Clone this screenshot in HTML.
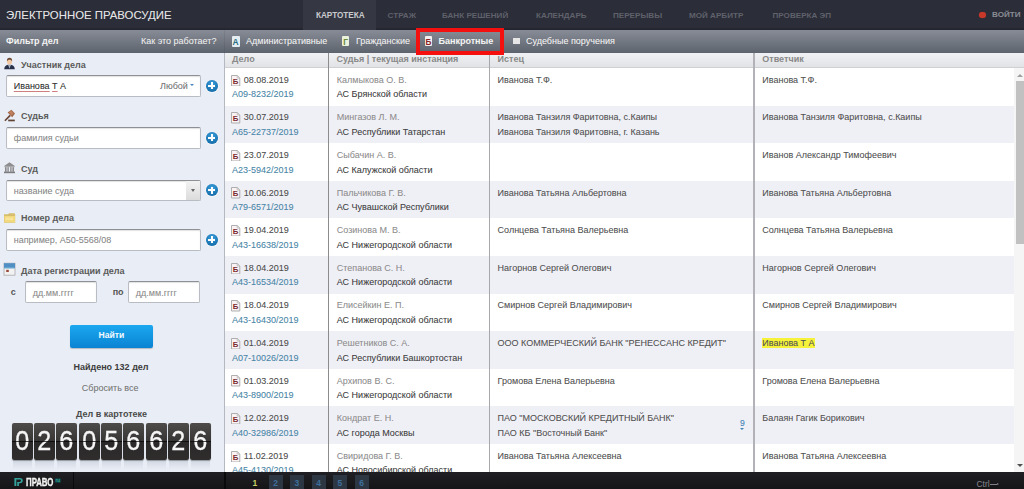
<!DOCTYPE html>
<html><head><meta charset="utf-8"><title>Картотека</title><style>
*{margin:0;padding:0}
html,body{width:1024px;height:489px;overflow:hidden;background:#fff}
body{position:relative;font-family:"Liberation Sans",sans-serif}
.t{position:absolute;white-space:nowrap;text-shadow:0 0 0.6px color-mix(in srgb,currentColor 28%,transparent)}
.r{position:absolute}
.plus{position:absolute;width:12px;height:12px;border-radius:50%;background:radial-gradient(circle at 50% 30%,#3a9edc,#1670ad 75%);box-shadow:0 0.5px 1.5px rgba(255,255,255,.95),0 0 0.5px rgba(0,40,80,.4)}
.plus:before{content:"";position:absolute;left:5px;top:2.5px;width:2px;height:7px;background:#fff}
.plus:after{content:"";position:absolute;left:2.5px;top:5px;width:7px;height:2px;background:#fff}
.sp{text-decoration:underline solid rgba(215,80,80,.6);text-decoration-thickness:0.6px;text-underline-offset:1.6px}
.tile{position:absolute;top:423px;width:20.6px;height:36.8px;border-radius:2px;background:linear-gradient(#4e4c4b,#383635 49%,#2a2828 51%,#302e2d);box-shadow:0 1px 1px rgba(0,0,0,.3);overflow:hidden}
.tile span{position:absolute;left:0;width:100%;text-align:center;top:4.2px;font-size:28px;line-height:28px;color:#f6f6f6;transform:scaleX(0.9);-webkit-text-stroke:0.3px #f6f6f6}
.tile:after{content:"";position:absolute;left:0;right:0;top:17.5px;height:1px;background:rgba(0,0,0,.7)}
.bicon{position:absolute;width:9px;height:10px;box-sizing:border-box;border:1px solid #a9a9a9;background:#fbf4f4}
.bicon span{position:absolute;left:0.9px;top:1.2px;font-size:7.6px;line-height:8px;font-weight:700;color:#8e2a34}
.hl{background:#f6f23a}
</style></head>
<body>
<div class="r" style="left:0.00px;top:0.00px;width:1024.00px;height:30.00px;background:linear-gradient(#2b2d38 90%,#22232c)"></div>
<div class="r" style="left:303.00px;top:0.00px;width:73.00px;height:30.00px;background:#353743"></div>
<div class="t" style="left:6.00px;top:10.15px;font-size:11.4px;line-height:11.4px;color:#e4e4e6;font-weight:400;">ЭЛЕКТРОННОЕ ПРАВОСУДИЕ</div>
<div class="t" style="left:315.90px;top:11.76px;font-size:8.2px;line-height:8.2px;color:#c9cace;font-weight:700;text-shadow:none;">КАРТОТЕКА</div>
<div class="t" style="left:387.60px;top:11.84px;font-size:8.1px;line-height:8.1px;color:#5f616b;font-weight:700;text-shadow:none;">СТРАЖ</div>
<div class="t" style="left:442.00px;top:11.84px;font-size:8.1px;line-height:8.1px;color:#5f616b;font-weight:700;text-shadow:none;">БАНК РЕШЕНИЙ</div>
<div class="t" style="left:536.00px;top:11.84px;font-size:8.1px;line-height:8.1px;color:#5f616b;font-weight:700;text-shadow:none;">КАЛЕНДАРЬ</div>
<div class="t" style="left:613.00px;top:11.84px;font-size:8.1px;line-height:8.1px;color:#5f616b;font-weight:700;text-shadow:none;">ПЕРЕРЫВЫ</div>
<div class="t" style="left:689.00px;top:11.84px;font-size:8.1px;line-height:8.1px;color:#5f616b;font-weight:700;text-shadow:none;">МОЙ АРБИТР</div>
<div class="t" style="left:772.50px;top:11.84px;font-size:8.1px;line-height:8.1px;color:#5f616b;font-weight:700;text-shadow:none;">ПРОВЕРКА ЭП</div>
<div class="r" style="left:979px;top:11.5px;width:6.8px;height:6.8px;border-radius:50%;background:#c8392a;box-shadow:0 0 1px rgba(200,57,42,.6)"></div>
<div class="t" style="left:992.00px;top:11.44px;font-size:8.1px;line-height:8.1px;color:#8a8c95;font-weight:700;text-shadow:none;">ВОЙТИ</div>
<div class="r" style="left:0.00px;top:30.00px;width:1024.00px;height:22.50px;background:linear-gradient(#878c96,#5d636c)"></div>
<div class="r" style="left:223.60px;top:30.00px;width:1.20px;height:22.50px;background:rgba(40,44,52,.1)"></div>
<div class="t" style="left:6.00px;top:37.38px;font-size:9px;line-height:9px;color:#f4f4f4;font-weight:700;text-shadow:none;">Фильтр дел</div>
<div class="t" style="left:141.00px;top:37.38px;font-size:9px;line-height:9px;color:#ececec;font-weight:400;">Как это работает?</div>
<div class="r" style="left:231.70px;top:36.00px;width:8.00px;height:10.80px;background:#e4eef2;border-radius:1px"></div>
<div class="t" style="left:232.60px;top:38.49px;font-size:8.4px;line-height:8.4px;color:#2a6b7e;font-weight:700;text-shadow:none;">A</div>
<div class="t" style="left:246.00px;top:37.38px;font-size:9px;line-height:9px;color:#f0f0f0;font-weight:400;">Административные</div>
<div class="r" style="left:341.80px;top:36.30px;width:7.50px;height:10.20px;background:#eaf2dc;border-radius:1px"></div>
<div class="t" style="left:343.20px;top:38.49px;font-size:8.4px;line-height:8.4px;color:#6b8a3b;font-weight:700;text-shadow:none;">Г</div>
<div class="t" style="left:355.90px;top:37.38px;font-size:9px;line-height:9px;color:#f0f0f0;font-weight:400;">Гражданские</div>
<div class="r" style="left:424.70px;top:35.70px;width:7.60px;height:10.80px;background:#f4f0f0;border-radius:1px"></div>
<div class="t" style="left:425.40px;top:38.66px;font-size:8.2px;line-height:8.2px;color:#8a2424;font-weight:700;text-shadow:none;">Б</div>
<div class="t" style="left:438.50px;top:37.38px;font-size:9px;line-height:9px;color:#f4f4f4;font-weight:700;text-shadow:none;">Банкротные</div>
<div class="r" style="left:513.20px;top:38.00px;width:6.50px;height:6.20px;background:#e6e6e6"></div>
<div class="t" style="left:526.00px;top:37.38px;font-size:9px;line-height:9px;color:#f0f0f0;font-weight:400;">Судебные поручения</div>
<div class="r" style="left:0.00px;top:52.50px;width:223.60px;height:419.50px;background:#e9eef6"></div>
<div class="r" style="left:223.60px;top:52.50px;width:1.40px;height:419.50px;background:#b4b8c0"></div>
<div class="t" style="left:21.00px;top:60.68px;font-size:9px;line-height:9px;color:#5a5a5a;font-weight:700;text-shadow:none;">Участник дела</div>
<div class="t" style="left:21.00px;top:112.48px;font-size:9px;line-height:9px;color:#5a5a5a;font-weight:700;text-shadow:none;">Судья</div>
<div class="t" style="left:21.00px;top:165.08px;font-size:9px;line-height:9px;color:#5a5a5a;font-weight:700;text-shadow:none;">Суд</div>
<div class="t" style="left:21.00px;top:213.88px;font-size:9px;line-height:9px;color:#5a5a5a;font-weight:700;text-shadow:none;">Номер дела</div>
<div class="t" style="left:21.00px;top:266.68px;font-size:9px;line-height:9px;color:#5a5a5a;font-weight:700;text-shadow:none;">Дата регистрации дела</div>
<div class="r" style="left:6.40px;top:75.20px;width:194.30px;height:22.20px;box-sizing:border-box;background:#fff;border:1px solid #b9bcc2;border-top-color:#8e9096;border-radius:2px;box-shadow:inset 0 1px 1px rgba(0,0,0,.12)"></div>
<div class="plus" style="left:205.8px;top:79.80px"></div>
<div class="r" style="left:6.40px;top:127.30px;width:194.30px;height:22.00px;box-sizing:border-box;background:#fff;border:1px solid #b9bcc2;border-top-color:#8e9096;border-radius:2px;box-shadow:inset 0 1px 1px rgba(0,0,0,.12)"></div>
<div class="plus" style="left:205.8px;top:131.80px"></div>
<div class="r" style="left:6.40px;top:179.60px;width:194.30px;height:21.90px;box-sizing:border-box;background:#fff;border:1px solid #b9bcc2;border-top-color:#8e9096;border-radius:2px;box-shadow:inset 0 1px 1px rgba(0,0,0,.12)"></div>
<div class="plus" style="left:205.8px;top:184.05px"></div>
<div class="r" style="left:6.40px;top:229.30px;width:194.30px;height:21.70px;box-sizing:border-box;background:#fff;border:1px solid #b9bcc2;border-top-color:#8e9096;border-radius:2px;box-shadow:inset 0 1px 1px rgba(0,0,0,.12)"></div>
<div class="plus" style="left:205.8px;top:233.65px"></div>
<div class="t" style="left:13.75px;top:82.18px;font-size:9px;line-height:9px;color:#333;font-weight:400;"><span class="sp">Иванова</span> <span class="sp">Т</span> А</div>
<div class="t" style="left:160.00px;top:82.18px;font-size:9px;line-height:9px;color:#777;font-weight:400;">Любой</div>
<div class="r" style="left:190.4px;top:84.3px;width:0;height:0;border-left:2.2px solid transparent;border-right:2.2px solid transparent;border-top:2.8px solid #4a86bd"></div>
<div class="t" style="left:13.75px;top:134.38px;font-size:9px;line-height:9px;color:#8a8a8a;font-weight:400;">фамилия судьи</div>
<div class="r" style="left:186.00px;top:180.60px;width:13.70px;height:19.80px;background:linear-gradient(#f2f2f2,#dcdcdc)"></div>
<div class="r" style="left:191px;top:189px;width:0;height:0;border-left:2.2px solid transparent;border-right:2.2px solid transparent;border-top:3.2px solid #666"></div>
<div class="t" style="left:13.75px;top:186.98px;font-size:9px;line-height:9px;color:#8a8a8a;font-weight:400;">название суда</div>
<div class="t" style="left:13.75px;top:236.38px;font-size:9px;line-height:9px;color:#8a8a8a;font-weight:400;">например, А50-5568/08</div>
<div class="t" style="left:10.80px;top:287.68px;font-size:9px;line-height:9px;color:#555;font-weight:700;text-shadow:none;">с</div>
<div class="t" style="left:112.70px;top:287.68px;font-size:9px;line-height:9px;color:#555;font-weight:700;text-shadow:none;">по</div>
<div class="r" style="left:25.20px;top:281.00px;width:72.00px;height:21.60px;box-sizing:border-box;background:#fff;border:1px solid #b9bcc2;border-top-color:#8e9096;border-radius:2px;box-shadow:inset 0 1px 1px rgba(0,0,0,.12)"></div>
<div class="t" style="left:32.80px;top:288.68px;font-size:9px;line-height:9px;color:#8e8e8e;font-weight:400;">дд.мм.гггг</div>
<div class="r" style="left:128.20px;top:281.00px;width:72.00px;height:21.60px;box-sizing:border-box;background:#fff;border:1px solid #b9bcc2;border-top-color:#8e9096;border-radius:2px;box-shadow:inset 0 1px 1px rgba(0,0,0,.12)"></div>
<div class="t" style="left:135.80px;top:288.68px;font-size:9px;line-height:9px;color:#8e8e8e;font-weight:400;">дд.мм.гггг</div>
<div class="r" style="left:69.90px;top:325.10px;width:83.10px;height:22.90px;background:linear-gradient(#1ba8f0,#0a83d3);border-radius:2px;box-shadow:0 1px 1px rgba(0,0,0,.22)"></div>
<div class="t" style="left:11.40px;width:200px;text-align:center;top:331.22px;font-size:8.6px;line-height:8.6px;color:#f4fbff;font-weight:700;text-shadow:none;">Найти</div>
<div class="t" style="left:11.00px;width:200px;text-align:center;top:362.58px;font-size:9px;line-height:9px;color:#3c3c3c;font-weight:700;text-shadow:none;">Найдено 132 дел</div>
<div class="t" style="left:10.20px;width:200px;text-align:center;top:384.18px;font-size:9px;line-height:9px;color:#777;font-weight:400;">Сбросить все</div>
<div class="t" style="left:11.50px;width:200px;text-align:center;top:409.78px;font-size:9px;line-height:9px;color:#4a4a4a;font-weight:700;text-shadow:none;">Дел в картотеке</div>
<div class="r" style="left:12.50px;top:460.00px;width:19.60px;height:10.00px;background:linear-gradient(rgba(120,130,150,.22),rgba(120,130,150,0))"></div>
<div class="tile" style="left:12px"><span>0</span></div>
<div class="r" style="left:34.60px;top:460.00px;width:19.60px;height:10.00px;background:linear-gradient(rgba(120,130,150,.22),rgba(120,130,150,0))"></div>
<div class="tile" style="left:34.1px"><span>2</span></div>
<div class="r" style="left:56.60px;top:460.00px;width:19.60px;height:10.00px;background:linear-gradient(rgba(120,130,150,.22),rgba(120,130,150,0))"></div>
<div class="tile" style="left:56.1px"><span>6</span></div>
<div class="r" style="left:79.70px;top:460.00px;width:19.60px;height:10.00px;background:linear-gradient(rgba(120,130,150,.22),rgba(120,130,150,0))"></div>
<div class="tile" style="left:79.2px"><span>0</span></div>
<div class="r" style="left:101.60px;top:460.00px;width:19.60px;height:10.00px;background:linear-gradient(rgba(120,130,150,.22),rgba(120,130,150,0))"></div>
<div class="tile" style="left:101.1px"><span>5</span></div>
<div class="r" style="left:123.50px;top:460.00px;width:19.60px;height:10.00px;background:linear-gradient(rgba(120,130,150,.22),rgba(120,130,150,0))"></div>
<div class="tile" style="left:123px"><span>6</span></div>
<div class="r" style="left:146.70px;top:460.00px;width:19.60px;height:10.00px;background:linear-gradient(rgba(120,130,150,.22),rgba(120,130,150,0))"></div>
<div class="tile" style="left:146.2px"><span>6</span></div>
<div class="r" style="left:168.80px;top:460.00px;width:19.60px;height:10.00px;background:linear-gradient(rgba(120,130,150,.22),rgba(120,130,150,0))"></div>
<div class="tile" style="left:168.3px"><span>2</span></div>
<div class="r" style="left:190.90px;top:460.00px;width:19.60px;height:10.00px;background:linear-gradient(rgba(120,130,150,.22),rgba(120,130,150,0))"></div>
<div class="tile" style="left:190.4px"><span>6</span></div>
<svg class="r" style="left:3px;top:57px" width="13" height="13" viewBox="0 0 13 13"><path d="M1.2 12.2 C1.4 9.2 3 8.2 5 7.8 L8 7.8 C10 8.2 11.6 9.2 11.8 12.2 Z" fill="#27324a"/><path d="M5.2 7.8 L6.5 11.5 L7.8 7.8 Z" fill="#e8ecf2"/><path d="M6.2 8.2 L6.5 11 L6.8 8.2 Z" fill="#3a4660"/><ellipse cx="6.5" cy="4.6" rx="2.5" ry="2.9" fill="#f2c9a2"/><path d="M3.9 4.6 C3.7 1.6 5 0.8 6.5 0.8 C8.2 0.8 9.4 1.8 9.1 4.6 C8.6 3.2 7.5 2.6 6.5 2.7 C5.4 2.7 4.4 3.2 3.9 4.6 Z" fill="#6b4a35"/></svg>
<svg class="r" style="left:3px;top:109px" width="13" height="13" viewBox="0 0 13 13"><path d="M1.3 11.2 L6.6 5.8 L7.8 7 L2.5 12.3 Z" fill="#6b4536"/><path d="M4.6 3.6 L8.4 0.8 L12 4.6 L9.2 8.2 Z" fill="#a2684a"/><path d="M5.8 3.6 L8.4 1.6 L10.6 4 L8.6 6.6 Z" fill="#c08060"/><rect x="5.2" y="10.6" width="6.6" height="1.7" fill="#5e4234"/></svg>
<svg class="r" style="left:3px;top:161px" width="13" height="13" viewBox="0 0 13 13"><path d="M1.2 5 L6.5 1.2 L11.8 5 Z" fill="#8e8e90"/><rect x="1.3" y="5" width="10.4" height="1.2" fill="#a8a8aa"/><rect x="2" y="6.2" width="1.6" height="4.6" fill="#8a8a8c"/><rect x="4.4" y="6.2" width="1.4" height="4.6" fill="#8a8a8c"/><rect x="7.2" y="6.2" width="1.4" height="4.6" fill="#8a8a8c"/><rect x="9.4" y="6.2" width="1.6" height="4.6" fill="#8a8a8c"/><rect x="1" y="10.6" width="11" height="1.6" fill="#7c7c7e"/></svg>
<svg class="r" style="left:3px;top:212px" width="13" height="12" viewBox="0 0 13 12"><path d="M1 2.2 L5 2.2 L6 1.2 L11.5 1.2 L12.2 2.6 L12.2 10.8 L1 10.8 Z" fill="#d6be6e"/><path d="M1.4 4 L12 4 L12 10.4 L1.4 10.4 Z" fill="#f3d97e"/><path d="M2.5 5.5 L10 5.5 L10 8 L2.5 8 Z" fill="#f8e49a"/></svg>
<svg class="r" style="left:3px;top:262px" width="13" height="14" viewBox="0 0 13 14"><rect x="1" y="1.2" width="11" height="12" fill="#f2f2f2" stroke="#a8a8aa" stroke-width="0.8"/><rect x="1" y="1.2" width="11" height="5" fill="#4f8fc4"/><rect x="1.5" y="5.6" width="10" height="1" fill="#8cc4e0"/><rect x="3.2" y="7.8" width="2.6" height="2.2" fill="#9a4a3a"/></svg>
<div class="r" style="left:225.00px;top:52.50px;width:799.00px;height:15.80px;background:linear-gradient(#f0f1f3,#e2e3e6);border-bottom:1.5px solid #cfd0d2;box-sizing:border-box"></div>
<div class="r" style="left:225.00px;top:68.00px;width:789.00px;height:37.60px;background:#ffffff"></div>
<svg class="r" style="left:231px;top:74.50px" width="9.5" height="11.5" viewBox="0 0 9.5 11.5"><path d="M0.5 0.5 H6.2 L8.8 3 V11 H0.5 Z" fill="#fbf3f3" stroke="#a6a6a6" stroke-width="0.9"/><path d="M6.2 0.5 V3 H8.8" fill="none" stroke="#b5b5b5" stroke-width="0.8"/><text x="1.8" y="9" font-family="Liberation Sans" font-size="7.8" font-weight="700" fill="#7a2a30">Б</text></svg>
<div class="t" style="left:243.80px;top:75.78px;font-size:9px;line-height:9px;color:#505050;font-weight:400;">08.08.2019</div>
<div class="t" style="left:232.00px;top:90.48px;font-size:9px;line-height:9px;color:#4c88a8;font-weight:400;">А09-8232/2019</div>
<div class="t" style="left:336.80px;top:75.78px;font-size:9px;line-height:9px;color:#909090;font-weight:400;">Калмыкова О. В.</div>
<div class="t" style="left:336.80px;top:90.48px;font-size:9px;line-height:9px;color:#444;font-weight:400;">АС Брянской области</div>
<div class="t" style="left:497.60px;top:75.78px;font-size:9px;line-height:9px;color:#555;font-weight:400;">Иванова Т.Ф.</div>
<div class="t" style="left:762.30px;top:75.78px;font-size:9px;line-height:9px;color:#555;font-weight:400;">Иванова Т.Ф.</div>
<div class="r" style="left:225.00px;top:105.60px;width:789.00px;height:37.60px;background:#efeff6"></div>
<svg class="r" style="left:231px;top:112.10px" width="9.5" height="11.5" viewBox="0 0 9.5 11.5"><path d="M0.5 0.5 H6.2 L8.8 3 V11 H0.5 Z" fill="#fbf3f3" stroke="#a6a6a6" stroke-width="0.9"/><path d="M6.2 0.5 V3 H8.8" fill="none" stroke="#b5b5b5" stroke-width="0.8"/><text x="1.8" y="9" font-family="Liberation Sans" font-size="7.8" font-weight="700" fill="#7a2a30">Б</text></svg>
<div class="t" style="left:243.80px;top:113.38px;font-size:9px;line-height:9px;color:#505050;font-weight:400;">30.07.2019</div>
<div class="t" style="left:232.00px;top:128.08px;font-size:9px;line-height:9px;color:#4c88a8;font-weight:400;">А65-22737/2019</div>
<div class="t" style="left:336.80px;top:113.38px;font-size:9px;line-height:9px;color:#909090;font-weight:400;">Мингазов Л. М.</div>
<div class="t" style="left:336.80px;top:128.08px;font-size:9px;line-height:9px;color:#444;font-weight:400;">АС Республики Татарстан</div>
<div class="t" style="left:497.60px;top:113.38px;font-size:9px;line-height:9px;color:#555;font-weight:400;">Иванова Танзиля Фаритовна, с.Каипы</div>
<div class="t" style="left:497.60px;top:127.78px;font-size:9px;line-height:9px;color:#555;font-weight:400;">Иванова Танзиля Фаритовна, г. Казань</div>
<div class="t" style="left:762.30px;top:113.38px;font-size:9px;line-height:9px;color:#555;font-weight:400;">Иванова Танзиля Фаритовна, с.Каипы</div>
<div class="r" style="left:225.00px;top:143.20px;width:789.00px;height:37.60px;background:#ffffff"></div>
<svg class="r" style="left:231px;top:149.70px" width="9.5" height="11.5" viewBox="0 0 9.5 11.5"><path d="M0.5 0.5 H6.2 L8.8 3 V11 H0.5 Z" fill="#fbf3f3" stroke="#a6a6a6" stroke-width="0.9"/><path d="M6.2 0.5 V3 H8.8" fill="none" stroke="#b5b5b5" stroke-width="0.8"/><text x="1.8" y="9" font-family="Liberation Sans" font-size="7.8" font-weight="700" fill="#7a2a30">Б</text></svg>
<div class="t" style="left:243.80px;top:150.98px;font-size:9px;line-height:9px;color:#505050;font-weight:400;">23.07.2019</div>
<div class="t" style="left:232.00px;top:165.68px;font-size:9px;line-height:9px;color:#4c88a8;font-weight:400;">А23-5942/2019</div>
<div class="t" style="left:336.80px;top:150.98px;font-size:9px;line-height:9px;color:#909090;font-weight:400;">Сыбачин А. В.</div>
<div class="t" style="left:336.80px;top:165.68px;font-size:9px;line-height:9px;color:#444;font-weight:400;">АС Калужской области</div>
<div class="t" style="left:762.30px;top:150.98px;font-size:9px;line-height:9px;color:#555;font-weight:400;">Иванов Александр Тимофеевич</div>
<div class="r" style="left:225.00px;top:180.80px;width:789.00px;height:37.60px;background:#efeff6"></div>
<svg class="r" style="left:231px;top:187.30px" width="9.5" height="11.5" viewBox="0 0 9.5 11.5"><path d="M0.5 0.5 H6.2 L8.8 3 V11 H0.5 Z" fill="#fbf3f3" stroke="#a6a6a6" stroke-width="0.9"/><path d="M6.2 0.5 V3 H8.8" fill="none" stroke="#b5b5b5" stroke-width="0.8"/><text x="1.8" y="9" font-family="Liberation Sans" font-size="7.8" font-weight="700" fill="#7a2a30">Б</text></svg>
<div class="t" style="left:243.80px;top:188.58px;font-size:9px;line-height:9px;color:#505050;font-weight:400;">10.06.2019</div>
<div class="t" style="left:232.00px;top:203.28px;font-size:9px;line-height:9px;color:#4c88a8;font-weight:400;">А79-6571/2019</div>
<div class="t" style="left:336.80px;top:188.58px;font-size:9px;line-height:9px;color:#909090;font-weight:400;">Пальчикова Г. В.</div>
<div class="t" style="left:336.80px;top:203.28px;font-size:9px;line-height:9px;color:#444;font-weight:400;">АС Чувашской Республики</div>
<div class="t" style="left:497.60px;top:188.58px;font-size:9px;line-height:9px;color:#555;font-weight:400;">Иванова Татьяна Альбертовна</div>
<div class="t" style="left:762.30px;top:188.58px;font-size:9px;line-height:9px;color:#555;font-weight:400;">Иванова Татьяна Альбертовна</div>
<div class="r" style="left:225.00px;top:218.40px;width:789.00px;height:37.60px;background:#ffffff"></div>
<svg class="r" style="left:231px;top:224.90px" width="9.5" height="11.5" viewBox="0 0 9.5 11.5"><path d="M0.5 0.5 H6.2 L8.8 3 V11 H0.5 Z" fill="#fbf3f3" stroke="#a6a6a6" stroke-width="0.9"/><path d="M6.2 0.5 V3 H8.8" fill="none" stroke="#b5b5b5" stroke-width="0.8"/><text x="1.8" y="9" font-family="Liberation Sans" font-size="7.8" font-weight="700" fill="#7a2a30">Б</text></svg>
<div class="t" style="left:243.80px;top:226.18px;font-size:9px;line-height:9px;color:#505050;font-weight:400;">19.04.2019</div>
<div class="t" style="left:232.00px;top:240.88px;font-size:9px;line-height:9px;color:#4c88a8;font-weight:400;">А43-16638/2019</div>
<div class="t" style="left:336.80px;top:226.18px;font-size:9px;line-height:9px;color:#909090;font-weight:400;">Созинова М. В.</div>
<div class="t" style="left:336.80px;top:240.88px;font-size:9px;line-height:9px;color:#444;font-weight:400;">АС Нижегородской области</div>
<div class="t" style="left:497.60px;top:226.18px;font-size:9px;line-height:9px;color:#555;font-weight:400;">Солнцева Татьяна Валерьевна</div>
<div class="t" style="left:762.30px;top:226.18px;font-size:9px;line-height:9px;color:#555;font-weight:400;">Солнцева Татьяна Валерьевна</div>
<div class="r" style="left:225.00px;top:256.00px;width:789.00px;height:37.60px;background:#efeff6"></div>
<svg class="r" style="left:231px;top:262.50px" width="9.5" height="11.5" viewBox="0 0 9.5 11.5"><path d="M0.5 0.5 H6.2 L8.8 3 V11 H0.5 Z" fill="#fbf3f3" stroke="#a6a6a6" stroke-width="0.9"/><path d="M6.2 0.5 V3 H8.8" fill="none" stroke="#b5b5b5" stroke-width="0.8"/><text x="1.8" y="9" font-family="Liberation Sans" font-size="7.8" font-weight="700" fill="#7a2a30">Б</text></svg>
<div class="t" style="left:243.80px;top:263.78px;font-size:9px;line-height:9px;color:#505050;font-weight:400;">18.04.2019</div>
<div class="t" style="left:232.00px;top:278.48px;font-size:9px;line-height:9px;color:#4c88a8;font-weight:400;">А43-16534/2019</div>
<div class="t" style="left:336.80px;top:263.78px;font-size:9px;line-height:9px;color:#909090;font-weight:400;">Степанова С. Н.</div>
<div class="t" style="left:336.80px;top:278.48px;font-size:9px;line-height:9px;color:#444;font-weight:400;">АС Нижегородской области</div>
<div class="t" style="left:497.60px;top:263.78px;font-size:9px;line-height:9px;color:#555;font-weight:400;">Нагорнов Сергей Олегович</div>
<div class="t" style="left:762.30px;top:263.78px;font-size:9px;line-height:9px;color:#555;font-weight:400;">Нагорнов Сергей Олегович</div>
<div class="r" style="left:225.00px;top:293.60px;width:789.00px;height:37.60px;background:#ffffff"></div>
<svg class="r" style="left:231px;top:300.10px" width="9.5" height="11.5" viewBox="0 0 9.5 11.5"><path d="M0.5 0.5 H6.2 L8.8 3 V11 H0.5 Z" fill="#fbf3f3" stroke="#a6a6a6" stroke-width="0.9"/><path d="M6.2 0.5 V3 H8.8" fill="none" stroke="#b5b5b5" stroke-width="0.8"/><text x="1.8" y="9" font-family="Liberation Sans" font-size="7.8" font-weight="700" fill="#7a2a30">Б</text></svg>
<div class="t" style="left:243.80px;top:301.38px;font-size:9px;line-height:9px;color:#505050;font-weight:400;">18.04.2019</div>
<div class="t" style="left:232.00px;top:316.08px;font-size:9px;line-height:9px;color:#4c88a8;font-weight:400;">А43-16430/2019</div>
<div class="t" style="left:336.80px;top:301.38px;font-size:9px;line-height:9px;color:#909090;font-weight:400;">Елисейкин Е. П.</div>
<div class="t" style="left:336.80px;top:316.08px;font-size:9px;line-height:9px;color:#444;font-weight:400;">АС Нижегородской области</div>
<div class="t" style="left:497.60px;top:301.38px;font-size:9px;line-height:9px;color:#555;font-weight:400;">Смирнов Сергей Владимирович</div>
<div class="t" style="left:762.30px;top:301.38px;font-size:9px;line-height:9px;color:#555;font-weight:400;">Смирнов Сергей Владимирович</div>
<div class="r" style="left:225.00px;top:331.20px;width:789.00px;height:37.60px;background:#efeff6"></div>
<svg class="r" style="left:231px;top:337.70px" width="9.5" height="11.5" viewBox="0 0 9.5 11.5"><path d="M0.5 0.5 H6.2 L8.8 3 V11 H0.5 Z" fill="#fbf3f3" stroke="#a6a6a6" stroke-width="0.9"/><path d="M6.2 0.5 V3 H8.8" fill="none" stroke="#b5b5b5" stroke-width="0.8"/><text x="1.8" y="9" font-family="Liberation Sans" font-size="7.8" font-weight="700" fill="#7a2a30">Б</text></svg>
<div class="t" style="left:243.80px;top:338.98px;font-size:9px;line-height:9px;color:#505050;font-weight:400;">01.04.2019</div>
<div class="t" style="left:232.00px;top:353.68px;font-size:9px;line-height:9px;color:#4c88a8;font-weight:400;">А07-10026/2019</div>
<div class="t" style="left:336.80px;top:338.98px;font-size:9px;line-height:9px;color:#909090;font-weight:400;">Решетников С. А.</div>
<div class="t" style="left:336.80px;top:353.68px;font-size:9px;line-height:9px;color:#444;font-weight:400;">АС Республики Башкортостан</div>
<div class="t" style="left:497.60px;top:338.98px;font-size:9px;line-height:9px;color:#555;font-weight:400;">ООО КОММЕРЧЕСКИЙ БАНК "РЕНЕССАНС КРЕДИТ"</div>
<div class="t" style="left:762.30px;top:338.98px;font-size:9px;line-height:9px;color:#555;font-weight:400;"><span class="hl">Иванова Т А</span></div>
<div class="r" style="left:225.00px;top:368.80px;width:789.00px;height:37.60px;background:#ffffff"></div>
<svg class="r" style="left:231px;top:375.30px" width="9.5" height="11.5" viewBox="0 0 9.5 11.5"><path d="M0.5 0.5 H6.2 L8.8 3 V11 H0.5 Z" fill="#fbf3f3" stroke="#a6a6a6" stroke-width="0.9"/><path d="M6.2 0.5 V3 H8.8" fill="none" stroke="#b5b5b5" stroke-width="0.8"/><text x="1.8" y="9" font-family="Liberation Sans" font-size="7.8" font-weight="700" fill="#7a2a30">Б</text></svg>
<div class="t" style="left:243.80px;top:376.58px;font-size:9px;line-height:9px;color:#505050;font-weight:400;">01.03.2019</div>
<div class="t" style="left:232.00px;top:391.28px;font-size:9px;line-height:9px;color:#4c88a8;font-weight:400;">А43-8900/2019</div>
<div class="t" style="left:336.80px;top:376.58px;font-size:9px;line-height:9px;color:#909090;font-weight:400;">Архипов В. С.</div>
<div class="t" style="left:336.80px;top:391.28px;font-size:9px;line-height:9px;color:#444;font-weight:400;">АС Нижегородской области</div>
<div class="t" style="left:497.60px;top:376.58px;font-size:9px;line-height:9px;color:#555;font-weight:400;">Громова Елена Валерьевна</div>
<div class="t" style="left:762.30px;top:376.58px;font-size:9px;line-height:9px;color:#555;font-weight:400;">Громова Елена Валерьевна</div>
<div class="r" style="left:225.00px;top:406.40px;width:789.00px;height:37.60px;background:#efeff6"></div>
<svg class="r" style="left:231px;top:412.90px" width="9.5" height="11.5" viewBox="0 0 9.5 11.5"><path d="M0.5 0.5 H6.2 L8.8 3 V11 H0.5 Z" fill="#fbf3f3" stroke="#a6a6a6" stroke-width="0.9"/><path d="M6.2 0.5 V3 H8.8" fill="none" stroke="#b5b5b5" stroke-width="0.8"/><text x="1.8" y="9" font-family="Liberation Sans" font-size="7.8" font-weight="700" fill="#7a2a30">Б</text></svg>
<div class="t" style="left:243.80px;top:414.18px;font-size:9px;line-height:9px;color:#505050;font-weight:400;">12.02.2019</div>
<div class="t" style="left:232.00px;top:428.88px;font-size:9px;line-height:9px;color:#4c88a8;font-weight:400;">А40-32986/2019</div>
<div class="t" style="left:336.80px;top:414.18px;font-size:9px;line-height:9px;color:#909090;font-weight:400;">Кондрат Е. Н.</div>
<div class="t" style="left:336.80px;top:428.88px;font-size:9px;line-height:9px;color:#444;font-weight:400;">АС города Москвы</div>
<div class="t" style="left:497.60px;top:414.18px;font-size:9px;line-height:9px;color:#555;font-weight:400;">ПАО "МОСКОВСКИЙ КРЕДИТНЫЙ БАНК"</div>
<div class="t" style="left:497.60px;top:428.58px;font-size:9px;line-height:9px;color:#555;font-weight:400;">ПАО КБ "Восточный Банк"</div>
<div class="t" style="left:762.30px;top:414.18px;font-size:9px;line-height:9px;color:#555;font-weight:400;">Балаян Гагик Борикович</div>
<div class="t" style="left:740.00px;top:418.52px;font-size:8.6px;line-height:8.6px;color:#3f85b5;font-weight:400;">9</div>
<div class="r" style="left:740.2px;top:427.60px;width:0;height:0;border-left:2.1px solid transparent;border-right:2.1px solid transparent;border-top:2.6px solid #3f85b5"></div>
<div class="r" style="left:225.00px;top:444.00px;width:789.00px;height:37.60px;background:#ffffff"></div>
<svg class="r" style="left:231px;top:450.50px" width="9.5" height="11.5" viewBox="0 0 9.5 11.5"><path d="M0.5 0.5 H6.2 L8.8 3 V11 H0.5 Z" fill="#fbf3f3" stroke="#a6a6a6" stroke-width="0.9"/><path d="M6.2 0.5 V3 H8.8" fill="none" stroke="#b5b5b5" stroke-width="0.8"/><text x="1.8" y="9" font-family="Liberation Sans" font-size="7.8" font-weight="700" fill="#7a2a30">Б</text></svg>
<div class="t" style="left:243.80px;top:451.78px;font-size:9px;line-height:9px;color:#505050;font-weight:400;">11.02.2019</div>
<div class="t" style="left:232.00px;top:466.48px;font-size:9px;line-height:9px;color:#4c88a8;font-weight:400;">А45-4130/2019</div>
<div class="t" style="left:336.80px;top:451.78px;font-size:9px;line-height:9px;color:#909090;font-weight:400;">Свиридова Г. В.</div>
<div class="t" style="left:336.80px;top:466.48px;font-size:9px;line-height:9px;color:#444;font-weight:400;">АС Новосибирской области</div>
<div class="t" style="left:497.60px;top:451.78px;font-size:9px;line-height:9px;color:#555;font-weight:400;">Иванова Татьяна Алексеевна</div>
<div class="t" style="left:762.30px;top:451.78px;font-size:9px;line-height:9px;color:#555;font-weight:400;">Иванова Татьяна Алексеевна</div>
<div class="t" style="left:232.00px;top:54.98px;font-size:9px;line-height:9px;color:#888;font-weight:700;text-shadow:none;">Дело</div>
<div class="t" style="left:336.50px;top:54.98px;font-size:9px;line-height:9px;color:#888;font-weight:700;text-shadow:none;">Судья | текущая инстанция</div>
<div class="t" style="left:497.60px;top:54.98px;font-size:9px;line-height:9px;color:#888;font-weight:700;text-shadow:none;">Истец</div>
<div class="t" style="left:762.30px;top:54.98px;font-size:9px;line-height:9px;color:#888;font-weight:700;text-shadow:none;">Ответчик</div>
<div class="r" style="left:327.90px;top:52.50px;width:1.30px;height:419.50px;background:#8c8c8c"></div>
<div class="r" style="left:488.90px;top:52.50px;width:1.30px;height:419.50px;background:#a8a8ac"></div>
<div class="r" style="left:753.20px;top:52.50px;width:1.60px;height:419.50px;background:#b2b2b8"></div>
<div class="r" style="left:1014.00px;top:68.00px;width:10.00px;height:404.00px;background:#f5f5f5"></div>
<div class="r" style="left:1016.00px;top:81.00px;width:8.00px;height:162.70px;background:#c1c1c1"></div>
<div class="r" style="left:1016.5px;top:73.5px;width:0;height:0;border-left:3.5px solid transparent;border-right:3.5px solid transparent;border-bottom:3.5px solid #a0a0a0"></div>
<div class="r" style="left:1016.5px;top:464px;width:0;height:0;border-left:3.5px solid transparent;border-right:3.5px solid transparent;border-top:3.5px solid #505050"></div>
<div class="r" style="left:416.10px;top:28.00px;width:87.90px;height:26.70px;box-sizing:border-box;border:4px solid #f3100f"></div>
<div class="r" style="left:0.00px;top:472.00px;width:1024.00px;height:17.00px;background:linear-gradient(#202024,#151518)"></div>
<div class="r" style="left:73.00px;top:472.00px;width:1.00px;height:17.00px;background:#0a0a0c"></div>
<div class="r" style="left:224.00px;top:472.00px;width:1.50px;height:17.00px;background:#0a0a0c"></div>
<svg class="r" style="left:14px;top:477.8px" width="9" height="8.6" viewBox="0 0 9 8.6"><path d="M0.4 0 H5.6 C7.9 0 8.8 1.1 8.8 2.6 C8.8 4.2 7.9 5.3 5.6 5.3 H4.9 V8.6 H3.2 V3.9 H5.5 C6.6 3.9 7 3.4 7 2.6 C7 1.8 6.6 1.4 5.5 1.4 H2.3 V8.6 H0.4 Z" fill="#35a39c"/></svg>
<div class="t" style="left:25.60px;top:478.20px;font-size:10.4px;line-height:10.4px;color:#f4f4f4;font-weight:700;text-shadow:none;"><span style="display:inline-block;transform:scaleX(0.755);transform-origin:0 0;-webkit-text-stroke:0.35px #f4f4f4">ПРАВО</span></div>
<div class="r" style="left:54.80px;top:478.40px;width:6.70px;height:4.60px;background:#0f3b3a;border-radius:1px"></div>
<div class="t" style="left:55.60px;top:478.59px;font-size:4.5px;line-height:4.5px;color:#3aa9a1;font-weight:700;text-shadow:none;">ru</div>
<div class="t" style="left:252.40px;top:478.80px;font-size:8.5px;line-height:8.5px;color:#c6cf66;font-weight:700;text-shadow:none;">1</div>
<div class="r" style="left:269.00px;top:474.80px;width:13.50px;height:14.20px;background:#2d3744"></div>
<div class="t" style="left:273.20px;top:478.80px;font-size:8.5px;line-height:8.5px;color:#3d6f9c;font-weight:700;text-shadow:none;">2</div>
<div class="r" style="left:290.20px;top:474.80px;width:13.50px;height:14.20px;background:#2d3744"></div>
<div class="t" style="left:294.40px;top:478.80px;font-size:8.5px;line-height:8.5px;color:#3d6f9c;font-weight:700;text-shadow:none;">3</div>
<div class="r" style="left:312.00px;top:474.80px;width:13.50px;height:14.20px;background:#2d3744"></div>
<div class="t" style="left:316.20px;top:478.80px;font-size:8.5px;line-height:8.5px;color:#3d6f9c;font-weight:700;text-shadow:none;">4</div>
<div class="r" style="left:333.40px;top:474.80px;width:13.50px;height:14.20px;background:#2d3744"></div>
<div class="t" style="left:337.60px;top:478.80px;font-size:8.5px;line-height:8.5px;color:#3d6f9c;font-weight:700;text-shadow:none;">5</div>
<div class="r" style="left:355.00px;top:474.80px;width:13.50px;height:14.20px;background:#2d3744"></div>
<div class="t" style="left:359.20px;top:478.80px;font-size:8.5px;line-height:8.5px;color:#3d6f9c;font-weight:700;text-shadow:none;">6</div>
<div class="t" style="left:976.60px;top:479.87px;font-size:8.3px;line-height:8.3px;color:#808086;font-weight:400;">Ctrl</div>
<div class="r" style="left:989.60px;top:484.00px;width:7.90px;height:0.90px;background:#808086"></div>
<div class="r" style="left:997px;top:482.6px;width:0;height:0;border-top:1.8px solid transparent;border-bottom:1.8px solid transparent;border-left:2.8px solid #808086"></div>
</body></html>
